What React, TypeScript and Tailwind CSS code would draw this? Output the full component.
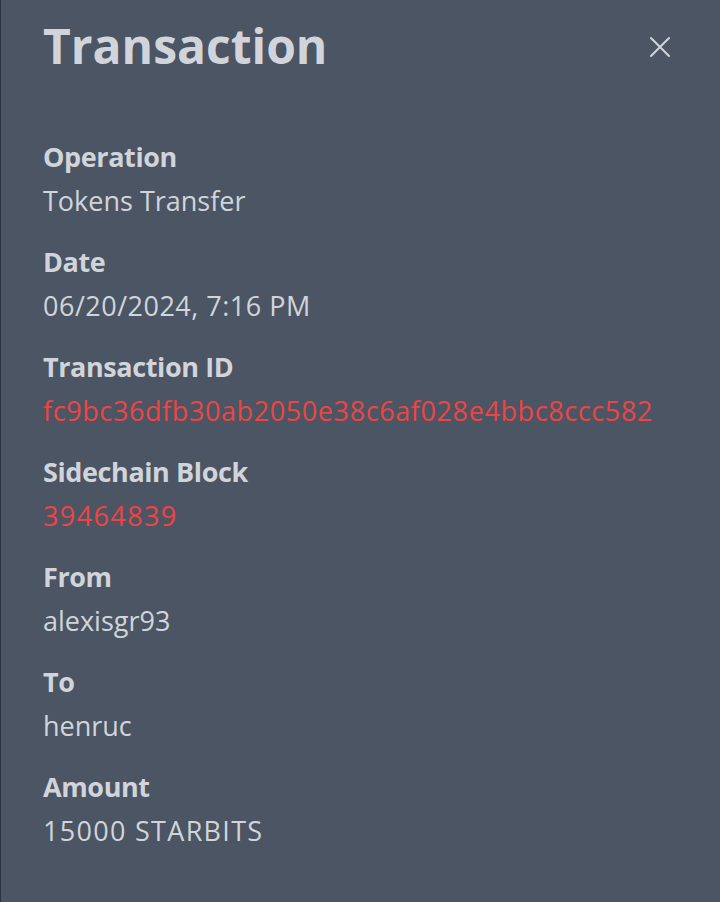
import React from "react";

const rows: { label: string; value: string; link?: boolean; track?: string }[] = [
  { label: "Operation", value: "Tokens Transfer" },
  { label: "Date", value: "06/20/2024, 7:16 PM", track: "tracking-[0.5px]" },
  { label: "Transaction ID", value: "fc9bc36dfb30ab2050e38c6af028e4bbc8ccc582", link: true, track: "tracking-[0.6px]" },
  { label: "Sidechain Block", value: "39464839", link: true, track: "tracking-[1.4px]" },
  { label: "From", value: "alexisgr93" },
  { label: "To", value: "henruc" },
  { label: "Amount", value: "15000 STARBITS", track: "tracking-[1.3px]" },
];

const App = () => {
  return (
    <div
      className="min-h-[902px] w-full bg-[#4b5563] border-l border-[#2b3340] text-[#d1d5db]"
      style={{ fontFamily: "'Open Sans', 'Noto Sans', sans-serif" }}
    >
      <div className="flex items-start justify-between pl-[42px] pr-[48px] pt-[10px]">
        <h1 className="text-[48px] font-bold leading-[72px]">Transaction</h1>
        <button className="mt-[25px] text-[#d1d5db]" aria-label="Close">
          <svg width="24" height="24" viewBox="0 0 24 24" fill="none" stroke="currentColor" strokeWidth="2" strokeLinecap="round">
            <path d="M3 3L21 21M21 3L3 21" />
          </svg>
        </button>
      </div>

      <div className="flex flex-col gap-[21px] pl-[42px] pt-[55px]">
        {rows.map(r => (
          <div key={r.label}>
            <div className="text-[27px] font-bold leading-[40px] tracking-[-0.4px]">{r.label}</div>
            <div
              className={
                "mt-[4px] text-[27px] leading-[40px] " +
                (r.link ? "text-[#ef4444] " : "text-[#d1d5db] ") +
                (r.track || "")
              }
            >
              {r.value}
            </div>
          </div>
        ))}
      </div>
    </div>
  );
};

export default App;
